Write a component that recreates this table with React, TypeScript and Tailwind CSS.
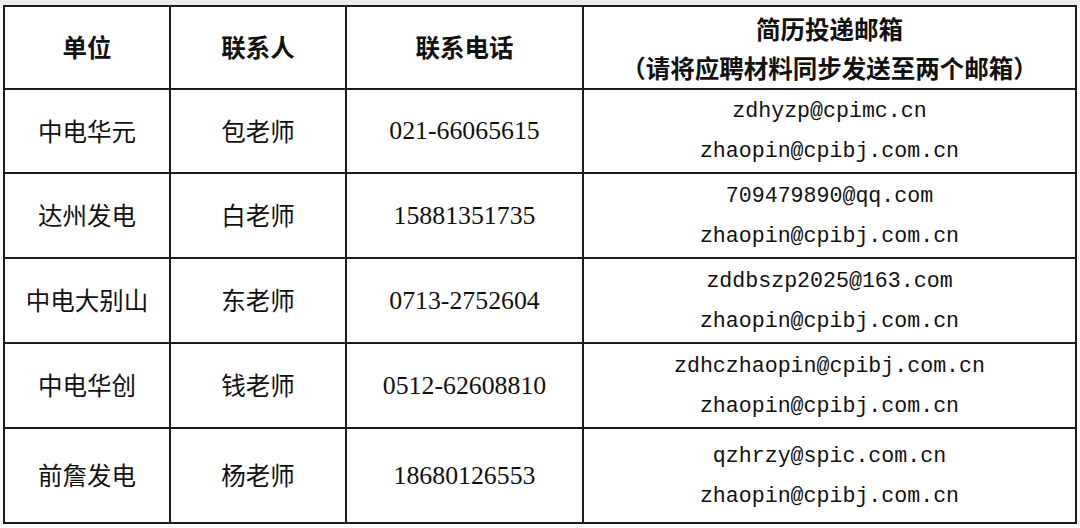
import React from "react";

const cjk = { fontFamily: '"Noto Sans CJK SC", "Noto Sans", sans-serif' };

const rows = [
  { unit: "中电华元", person: "包老师", phone: "021-66065615", emails: ["zdhyzp@cpimc.cn", "zhaopin@cpibj.com.cn"] },
  { unit: "达州发电", person: "白老师", phone: "15881351735", emails: ["709479890@qq.com", "zhaopin@cpibj.com.cn"] },
  { unit: "中电大别山", person: "东老师", phone: "0713-2752604", emails: ["zddbszp2025@163.com", "zhaopin@cpibj.com.cn"] },
  { unit: "中电华创", person: "钱老师", phone: "0512-62608810", emails: ["zdhczhaopin@cpibj.com.cn", "zhaopin@cpibj.com.cn"] },
  { unit: "前詹发电", person: "杨老师", phone: "18680126553", emails: ["qzhrzy@spic.com.cn", "zhaopin@cpibj.com.cn"] },
];

function Cell({ children }: { children: React.ReactNode }) {
  return <div className="bg-white flex flex-col items-center justify-center text-[#111]">{children}</div>;
}

export default function App() {
  return (
    <div className="w-[1080px] h-[528px] bg-white overflow-hidden">
      <div className="h-[5px] bg-[#ececec]" />
      <div className="pl-[3px]">
        <div className="grid w-[1074px] grid-cols-[164px_174px_235px_491px] grid-rows-[81px_82px_83px_83px_83px_93px] gap-[2px] p-[2px] bg-[#1c1c1c]">
          <Cell>
            <span className="text-[24.5px] font-bold leading-none" style={cjk}>单位</span>
          </Cell>
          <Cell>
            <span className="text-[24.5px] font-bold leading-none" style={cjk}>联系人</span>
          </Cell>
          <Cell>
            <span className="text-[24.5px] font-bold leading-none" style={cjk}>联系电话</span>
          </Cell>
          <Cell>
            <span className="text-[24.5px] font-bold leading-[39px]" style={cjk}>简历投递邮箱</span>
            <span className="text-[24.5px] font-bold leading-[39px]" style={cjk}>（请将应聘材料同步发送至两个邮箱）</span>
          </Cell>
          {rows.map((r) => (
            <React.Fragment key={r.unit}>
              <Cell>
                <span className="text-[24.5px] leading-none" style={cjk}>{r.unit}</span>
              </Cell>
              <Cell>
                <span className="text-[24.5px] leading-none" style={cjk}>{r.person}</span>
              </Cell>
              <Cell>
                <span className="text-[25.8px] leading-none font-['Liberation_Serif',serif]">{r.phone}</span>
              </Cell>
              <Cell>
                {r.emails.map((e, i) => (
                  <span key={i} className="text-[21.6px] leading-[40px] font-['Liberation_Mono',monospace]">{e}</span>
                ))}
              </Cell>
            </React.Fragment>
          ))}
        </div>
      </div>
    </div>
  );
}
